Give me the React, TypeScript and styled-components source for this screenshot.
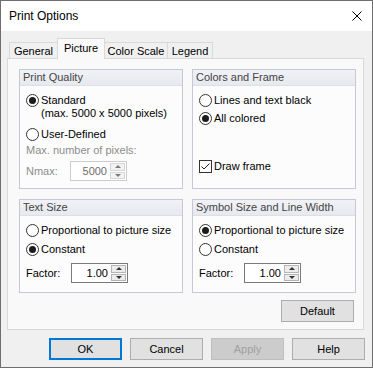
import React from 'react';
import styled, { createGlobalStyle } from 'styled-components';

const Global = createGlobalStyle`
  html, body { margin: 0; padding: 0; background: #ffffff; }
  body {
    font-family: "Liberation Sans", Arial, sans-serif;
    font-size: 11px;
    color: #000;
  }
  * { box-sizing: border-box; }
`;

const Window = styled.div`
  width: 373px;
  height: 368px;
  border: 1px solid #6e6e6e;
  background: #f0f0f0;
  display: flex;
  flex-direction: column;
`;

const TitleBar = styled.div`
  height: 30px;
  background: #ffffff;
  display: flex;
  align-items: center;
  justify-content: space-between;
  padding: 0 10px 0 8px;
  font-size: 12px;
  color: #000;
`;

const CloseIcon = styled.svg`
  width: 10px;
  height: 10px;
  margin-top: -1px;
`;

const Body = styled.div`
  display: flex;
  flex-direction: column;
  padding: 7px 8px 0 6px;
`;

const TabStrip = styled.div`
  display: flex;
  align-items: flex-end;
  height: 21px;
  margin-left: 2px;
  margin-bottom: -1px;
  position: relative;
  z-index: 1;
`;

const Tab = styled.div<{ $w: number; $active?: boolean }>`
  width: ${(p) => p.$w}px;
  height: ${(p) => (p.$active ? 21 : 17)}px;
  margin-left: -1px;
  border: 1px solid #d9d9d9;
  border-bottom: ${(p) => (p.$active ? 'none' : '1px solid #d9d9d9')};
  background: ${(p) => (p.$active ? '#f9f9f9' : '#f0f0f0')};
  display: flex;
  align-items: center;
  justify-content: center;
  padding-bottom: ${(p) => (p.$active ? 2 : 0)}px;
  position: relative;
  z-index: ${(p) => (p.$active ? 2 : 1)};
  &:first-child { margin-left: 0; }
`;

const Panel = styled.div`
  width: 357px;
  height: 272px;
  border: 1px solid #d9d9d9;
  background: #f9f9f9;
  padding: 10px 7px 7px 11px;
  display: flex;
  flex-direction: column;
`;

const Grid = styled.div`
  display: grid;
  grid-template-columns: 164px 164px;
  grid-template-rows: 120px 94px;
  column-gap: 9px;
  row-gap: 10px;
`;

const GroupBox = styled.div`
  border: 1px solid #c5c8d6;
  background: #fcfcfd;
  display: flex;
  flex-direction: column;
`;

const GroupHeader = styled.div`
  height: 16px;
  line-height: 15px;
  padding-left: 3px;
  color: #444444;
  background: linear-gradient(#f1f2f6, #e7e9ef);
  border-bottom: 1px solid #dcdfe8;
`;

const GroupContent = styled.div`
  display: flex;
  flex-direction: column;
  padding-left: 6px;
`;

const OptionRow = styled.div<{ $mt: number }>`
  display: flex;
  align-items: flex-start;
  gap: 2px;
  margin-top: ${(p) => p.$mt}px;
`;

const RadioCircle = styled.span`
  width: 13px;
  height: 13px;
  flex: none;
  border-radius: 50%;
  border: 1px solid #333333;
  background: #ffffff;
  display: flex;
  align-items: center;
  justify-content: center;
`;

const RadioDot = styled.span`
  width: 7px;
  height: 7px;
  border-radius: 50%;
  background: #1c1c1c;
`;

const CheckBoxBox = styled.span`
  width: 13px;
  height: 13px;
  flex: none;
  border: 1px solid #333333;
  background: #ffffff;
  display: flex;
`;

const Label = styled.span<{ $disabled?: boolean }>`
  line-height: 13px;
  color: ${(p) => (p.$disabled ? '#8c8c8c' : '#000')};
  white-space: nowrap;
`;

const TextLine = styled.div<{ $mt: number; $disabled?: boolean }>`
  margin-top: ${(p) => p.$mt}px;
  line-height: 13px;
  color: ${(p) => (p.$disabled ? '#8c8c8c' : '#000')};
`;

const FieldRow = styled.div<{ $mt: number }>`
  display: flex;
  align-items: center;
  height: 20px;
  margin-top: ${(p) => p.$mt}px;
`;

const FieldLabel = styled.span<{ $w: number; $disabled?: boolean }>`
  width: ${(p) => p.$w}px;
  color: ${(p) => (p.$disabled ? '#8c8c8c' : '#000')};
`;

const SpinBox = styled.div<{ $disabled?: boolean }>`
  width: 57px;
  height: 20px;
  border: 1px solid ${(p) => (p.$disabled ? '#cccccc' : '#7a7a7a')};
  background: #ffffff;
  display: flex;
  padding: 1px;
`;

const SpinValue = styled.span<{ $disabled?: boolean }>`
  flex: 1;
  text-align: right;
  line-height: 16px;
  padding-right: 3px;
  color: ${(p) => (p.$disabled ? '#6d6d6d' : '#000')};
`;

const SpinButtons = styled.div`
  width: 15px;
  display: flex;
  flex-direction: column;
  gap: 1px;
`;

const SpinButton = styled.div<{ $disabled?: boolean }>`
  flex: 1;
  border: 1px solid ${(p) => (p.$disabled ? '#d6d6d6' : '#b4b4b4')};
  background: ${(p) => (p.$disabled ? '#f2f2f2' : '#ececec')};
  display: flex;
  align-items: center;
  justify-content: center;
`;

const Arrow = styled.span<{ $dir: 'up' | 'down'; $disabled?: boolean }>`
  width: 0;
  height: 0;
  border-left: 3px solid transparent;
  border-right: 3px solid transparent;
  ${(p) =>
    p.$dir === 'up'
      ? `border-bottom: 3px solid ${p.$disabled ? '#7a7a7a' : '#333'};`
      : `border-top: 3px solid ${p.$disabled ? '#7a7a7a' : '#333'};`}
`;

const DefaultRow = styled.div`
  display: flex;
  justify-content: flex-end;
  margin-top: 7px;
  padding-right: 2px;
`;

const Button = styled.div<{ $primary?: boolean; $disabled?: boolean }>`
  width: 73px;
  height: 22px;
  display: flex;
  align-items: center;
  justify-content: center;
  background: ${(p) => (p.$disabled ? '#cccccc' : '#e1e1e1')};
  border: ${(p) =>
    p.$primary ? '2px solid #0078d7' : p.$disabled ? '1px solid #bfbfbf' : '1px solid #adadad'};
  color: ${(p) => (p.$disabled ? '#a0a0a0' : '#000')};
`;

const ButtonRow = styled.div`
  display: flex;
  justify-content: flex-end;
  gap: 8px;
  margin-top: 8px;
  margin-right: -1px;
`;

const Radio: React.FC<{ checked?: boolean; mt: number; children: React.ReactNode }> = ({
  checked,
  mt,
  children,
}) => (
  <OptionRow $mt={mt}>
    <RadioCircle>{checked && <RadioDot />}</RadioCircle>
    <Label>{children}</Label>
  </OptionRow>
);

const Spin: React.FC<{ value: string; disabled?: boolean }> = ({ value, disabled }) => (
  <SpinBox $disabled={disabled}>
    <SpinValue $disabled={disabled}>{value}</SpinValue>
    <SpinButtons>
      <SpinButton $disabled={disabled}>
        <Arrow $dir="up" $disabled={disabled} />
      </SpinButton>
      <SpinButton $disabled={disabled}>
        <Arrow $dir="down" $disabled={disabled} />
      </SpinButton>
    </SpinButtons>
  </SpinBox>
);

export default function App() {
  return (
    <>
      <Global />
      <Window>
        <TitleBar>
          <span>Print Options</span>
          <CloseIcon viewBox="0 0 10 10">
            <path d="M0.5 0.5 L9.5 9.5 M9.5 0.5 L0.5 9.5" stroke="#000" strokeWidth="1" />
          </CloseIcon>
        </TitleBar>
        <Body>
          <TabStrip>
            <Tab $w={49}>General</Tab>
            <Tab $w={48} $active>
              Picture
            </Tab>
            <Tab $w={64}>Color Scale</Tab>
            <Tab $w={46}>Legend</Tab>
          </TabStrip>
          <Panel>
            <Grid>
              <GroupBox>
                <GroupHeader>Print Quality</GroupHeader>
                <GroupContent>
                  <Radio checked mt={8}>
                    Standard
                    <br />
                    (max. 5000 x 5000 pixels)
                  </Radio>
                  <Radio mt={8}>User-Defined</Radio>
                  <TextLine $mt={3} $disabled>
                    Max. number of pixels:
                  </TextLine>
                  <FieldRow $mt={4}>
                    <FieldLabel $w={44} $disabled>
                      Nmax:
                    </FieldLabel>
                    <Spin value="5000" disabled />
                  </FieldRow>
                </GroupContent>
              </GroupBox>
              <GroupBox>
                <GroupHeader>Colors and Frame</GroupHeader>
                <GroupContent>
                  <Radio mt={8}>Lines and text black</Radio>
                  <Radio checked mt={5}>
                    All colored
                  </Radio>
                  <OptionRow $mt={35}>
                    <CheckBoxBox>
                      <svg width="11" height="11" viewBox="0 0 11 11">
                        <polyline
                          points="1.5,5.5 4,8 9.5,2.5"
                          fill="none"
                          stroke="#222"
                          strokeWidth="1"
                        />
                      </svg>
                    </CheckBoxBox>
                    <Label>Draw frame</Label>
                  </OptionRow>
                </GroupContent>
              </GroupBox>
              <GroupBox>
                <GroupHeader>Text Size</GroupHeader>
                <GroupContent>
                  <Radio mt={8}>Proportional to picture size</Radio>
                  <Radio checked mt={6}>
                    Constant
                  </Radio>
                  <FieldRow $mt={7}>
                    <FieldLabel $w={45}>Factor:</FieldLabel>
                    <Spin value="1.00" />
                  </FieldRow>
                </GroupContent>
              </GroupBox>
              <GroupBox>
                <GroupHeader>Symbol Size and Line Width</GroupHeader>
                <GroupContent>
                  <Radio checked mt={8}>
                    Proportional to picture size
                  </Radio>
                  <Radio mt={6}>Constant</Radio>
                  <FieldRow $mt={7}>
                    <FieldLabel $w={45}>Factor:</FieldLabel>
                    <Spin value="1.00" />
                  </FieldRow>
                </GroupContent>
              </GroupBox>
            </Grid>
            <DefaultRow>
              <Button>Default</Button>
            </DefaultRow>
          </Panel>
          <ButtonRow>
            <Button $primary>OK</Button>
            <Button>Cancel</Button>
            <Button $disabled>Apply</Button>
            <Button>Help</Button>
          </ButtonRow>
        </Body>
      </Window>
    </>
  );
}
